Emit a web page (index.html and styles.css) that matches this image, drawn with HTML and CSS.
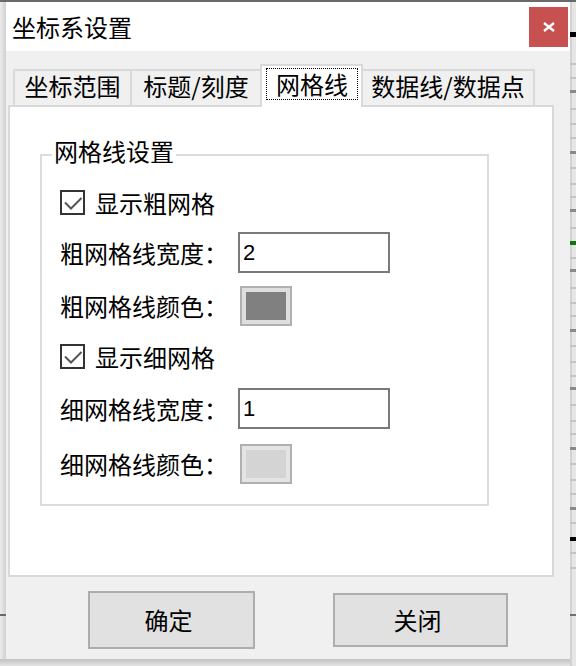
FILE: index.html
```html
<!DOCTYPE html>
<html lang="zh-CN">
<head>
<meta charset="utf-8">
<title>坐标系设置</title>
<link rel="stylesheet" href="styles.css">
</head>
<body>
<div class="desk">
  <div class="topline"></div>
  <div class="edge-left"></div>
  <div class="window">
    <div class="titlebar">
      <span class="title">坐标系设置</span>
      <button class="close" aria-label="关闭">
        <svg width="12" height="10" viewBox="0 0 12 10"><path d="M1 1 L11 9 M11 1 L1 9" stroke="#fff" stroke-width="2.4" fill="none"/></svg>
      </button>
    </div>
    <div class="tabs">
      <div class="tab t1">坐标范围</div>
      <div class="tab t2">标题/刻度</div>
      <div class="tab active"><span class="focus">网格线</span></div>
      <div class="tab t4">数据线/数据点</div>
    </div>
    <div class="panel">
      <fieldset class="group">
        <legend>网格线设置</legend>
        <div class="row chk r1">
          <span class="box"><svg width="21" height="21" viewBox="0 0 21 21"><path d="M3 10.5 L9 16.5 L19.5 6" stroke="#555" stroke-width="2" fill="none"/></svg></span>
          <span class="chk-text">显示粗网格</span>
        </div>
        <div class="row r2">
          <span class="field-label">粗网格线宽度：</span>
          <span class="input">2</span>
        </div>
        <div class="row r3">
          <span class="field-label">粗网格线颜色：</span>
          <span class="swatch"><span class="fill dark"></span></span>
        </div>
        <div class="row chk r4">
          <span class="box"><svg width="21" height="21" viewBox="0 0 21 21"><path d="M3 10.5 L9 16.5 L19.5 6" stroke="#555" stroke-width="2" fill="none"/></svg></span>
          <span class="chk-text">显示细网格</span>
        </div>
        <div class="row r5">
          <span class="field-label">细网格线宽度：</span>
          <span class="input">1</span>
        </div>
        <div class="row r6">
          <span class="field-label">细网格线颜色：</span>
          <span class="swatch light"><span class="fill lightfill"></span></span>
        </div>
      </fieldset>
    </div>
    <div class="actions">
      <button class="btn ok">确定</button>
      <button class="btn cancel">关闭</button>
    </div>
  </div>
  <div class="edge-right">
    <svg width="6" height="664" viewBox="0 0 6 664">
      <rect x="0" y="0" width="6" height="664" fill="#e6e6e6"/>
      <rect x="0" y="0" width="2" height="664" fill="#d2d2d2"/>
      <g fill="#c4c4c4">
        <rect x="0" y="61" width="6" height="2"/>
        <rect x="0" y="75" width="6" height="2"/>
        <rect x="0" y="106" width="6" height="2"/>
        <rect x="0" y="121" width="6" height="2"/>
        <rect x="0" y="135" width="6" height="2"/>
        <rect x="0" y="165" width="6" height="2"/>
        <rect x="0" y="181" width="6" height="2"/>
        <rect x="0" y="194" width="6" height="2"/>
        <rect x="0" y="225" width="6" height="2"/>
        <rect x="0" y="255" width="6" height="2"/>
        <rect x="0" y="285" width="6" height="2"/>
        <rect x="0" y="300" width="6" height="2"/>
        <rect x="0" y="313" width="6" height="2"/>
        <rect x="0" y="343" width="6" height="2"/>
        <rect x="0" y="359" width="6" height="2"/>
        <rect x="0" y="373" width="6" height="2"/>
        <rect x="0" y="402" width="6" height="2"/>
        <rect x="0" y="418" width="6" height="2"/>
        <rect x="0" y="431" width="6" height="2"/>
        <rect x="0" y="461" width="6" height="2"/>
        <rect x="0" y="477" width="6" height="2"/>
        <rect x="0" y="491" width="6" height="2"/>
        <rect x="0" y="520" width="6" height="2"/>
        <rect x="0" y="550" width="6" height="2"/>
        <rect x="0" y="565" width="6" height="2"/>
      </g>
      <g fill="#8a8a8a">
        <rect x="0" y="88" width="6" height="3"/>
        <rect x="0" y="149" width="6" height="3"/>
        <rect x="0" y="207" width="6" height="3"/>
        <rect x="0" y="267" width="6" height="3"/>
        <rect x="0" y="327" width="6" height="3"/>
        <rect x="0" y="385" width="6" height="3"/>
        <rect x="0" y="445" width="6" height="3"/>
        <rect x="0" y="505" width="6" height="3"/>
      </g>
      <rect x="0" y="30" width="6" height="5" fill="#000"/>
      <rect x="0" y="535" width="6" height="4" fill="#000"/>
      <rect x="0" y="239" width="6" height="4" fill="#0a780a"/>
      <rect x="0" y="612" width="6" height="2" fill="#707070"/>
    </svg>
  </div>
  <div class="edge-bottom"></div>
</div>
</body>
</html>
```

FILE: styles.css
```css
* {
  box-sizing: border-box;
}

html,
body {
  margin: 0;
  padding: 0;
}

body {
  width: 576px;
  height: 666px;
  overflow: hidden;
  background: #e5e5e5;
  font-family: "Noto Sans CJK SC", sans-serif;
  color: #000;
}

.desk {
  display: grid;
  grid-template-columns: 6px 564px 6px;
  grid-template-rows: 2px 657px 7px;
  width: 576px;
  height: 666px;
}

.topline {
  grid-column: 1 / -1;
  grid-row: 1;
  background: #6a6a6a;
}

.edge-left {
  grid-column: 1;
  grid-row: 2;
  background:
    linear-gradient(#6a6a6a, #6a6a6a) 0 612px / 100% 2px no-repeat,
    linear-gradient(to right, #ececec, #d0d0d0);
}

.edge-right {
  grid-column: 3;
  grid-row: 2 / 4;
}

.edge-right svg {
  display: block;
}

.edge-bottom {
  grid-column: 1 / 3;
  grid-row: 3;
  background: linear-gradient(to bottom, #c2c2c2, #e4e4e4);
}

.window {
  grid-column: 2;
  grid-row: 2;
  background: #f0f0f0;
  display: flex;
  flex-direction: column;
}

.titlebar {
  height: 49px;
  flex: none;
  background: #fff;
  display: flex;
  justify-content: space-between;
  align-items: center;
  padding-left: 6px;
}

.title {
  font-size: 24px;
  line-height: 24px;
}

.close {
  width: 39px;
  height: 40px;
  margin-right: 2px;
  margin-top: 1px;
  border: 0;
  padding: 0;
  background: #c75050;
  display: flex;
  align-items: center;
  justify-content: center;
}

.close svg {
  display: block;
}

.tabs {
  height: 54px;
  flex: none;
  display: flex;
  align-items: flex-end;
  padding-left: 7px;
}

.tab {
  flex: none;
  height: 36px;
  border: 2px solid #d9d9d9;
  border-bottom: 0;
  background: #f0f0f0;
  font-size: 24px;
  line-height: 24px;
  padding-top: 3px;
  text-align: center;
  white-space: nowrap;
}

.t1 {
  width: 119px;
}

.t2 {
  width: 130px;
  border-left: 0;
}

.tab.active {
  width: 103px;
  height: 43px;
  margin: 0 -2px -2px;
  background: #fff;
  position: relative;
  z-index: 1;
  padding: 2px 0 0 4px;
  text-align: left;
}

.t4 {
  width: 174px;
}

.focus {
  display: block;
  width: 92px;
  height: 32px;
  border: 1px dotted #000;
  line-height: 30px;
  text-align: center;
}

.panel {
  flex: none;
  margin-left: 2px;
  width: 546px;
  height: 472px;
  border: 2px solid #d9d9d9;
  background: #fff;
  padding-left: 30px;
  padding-top: 32px;
}

.group {
  margin: 0;
  width: 449px;
  min-width: 0;
  border: 2px solid #dcdcdc;
  padding: 0 0 20px 10px;
}

.group legend {
  font-size: 24px;
  line-height: 24px;
  padding: 0 2px 8px;
  margin-left: 0;
}

.row {
  display: flex;
  align-items: center;
  padding-left: 8px;
  font-size: 24px;
  line-height: 24px;
}

.chk {
  height: 25px;
}

.r1 {
  margin-top: 19px;
}

.r2 {
  margin-top: 17px;
  height: 41px;
}

.r3 {
  margin-top: 13px;
  height: 40px;
}

.r4 {
  margin-top: 18px;
}

.r5 {
  margin-top: 19px;
  height: 41px;
}

.r6 {
  margin-top: 15px;
  height: 40px;
}

.box {
  flex: none;
  width: 25px;
  height: 25px;
  border: 2px solid #333;
  background: #fff;
  margin-right: 10px;
}

.box svg {
  display: block;
}

.field-label {
  flex: none;
  width: 178px;
}

.input {
  flex: none;
  width: 152px;
  height: 41px;
  border: 2px solid #7a7a7a;
  background: #fff;
  padding-left: 3px;
  display: flex;
  align-items: center;
  font-family: "Liberation Sans", sans-serif;
  font-size: 22px;
}

.swatch {
  flex: none;
  width: 52px;
  height: 40px;
  margin-left: 2px;
  border: 2px solid #b0b0b0;
  padding: 4px;
  background: #dedede;
  display: flex;
}

.swatch.light {
  background: #e4e4e4;
}

.fill {
  flex: 1;
}

.fill.dark {
  background: #808080;
}

.fill.lightfill {
  background: #d4d4d4;
}

.actions {
  flex: 1;
  display: flex;
  align-items: center;
  padding-left: 82px;
  padding-top: 4px;
}

.btn {
  flex: none;
  border: 2px solid #adadad;
  background: #e1e1e1;
  font-family: "Noto Sans CJK SC", sans-serif;
  font-size: 24px;
  line-height: 24px;
  color: #000;
  padding: 0 6px 0 0;
}

.ok {
  width: 167px;
  height: 58px;
}

.cancel {
  width: 175px;
  height: 54px;
  margin-left: 78px;
}
```
